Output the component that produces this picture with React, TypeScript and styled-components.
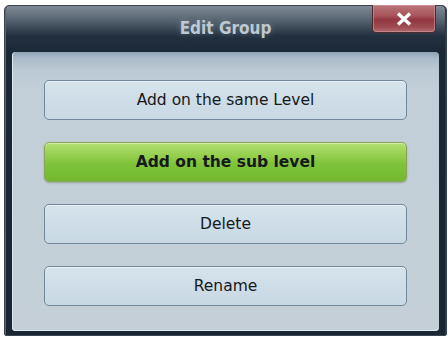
import React from "react";
import styled, { createGlobalStyle } from "styled-components";

const Global = createGlobalStyle`
  html, body { margin: 0; padding: 0; background: #ffffff; }
  body { font-family: "DejaVu Sans", sans-serif; }
`;

const Page = styled.div`
  padding: 5px 1px 1px 4px;
  width: 448px;
  height: 337px;
  box-sizing: border-box;
`;

const Window = styled.div`
  width: 443px;
  height: 331px;
  box-sizing: border-box;
  border: 1px solid #3a4550;
  border-radius: 5px 5px 2px 2px;
  background: linear-gradient(
    180deg,
    #7f8a95 0px,
    #63707c 10px,
    #3c4a58 22px,
    #22303f 30px,
    #1b2836 46px,
    #1a2633 100%
  );
  box-shadow: inset 1px 0 0 #59646f, inset -1px 0 0 #2c3845;
  display: flex;
  flex-direction: column;
  padding: 0 7px 4px 7px;
`;

const TitleBar = styled.div`
  height: 46px;
  display: grid;
  grid-template-columns: 1fr auto 1fr;
  align-items: center;
`;

const Title = styled.div`
  grid-column: 2;
  font-family: "DejaVu Sans Condensed", "DejaVu Sans", sans-serif;
  font-weight: bold;
  font-size: 17px;
  color: #bfc8d1;
  text-shadow: 0 0 6px rgba(200, 215, 230, 0.3);
  margin-top: -3px;
`;

const CloseButton = styled.div`
  grid-column: 3;
  justify-self: end;
  align-self: start;
  margin-right: 3px;
  margin-top: -1px;
  width: 64px;
  height: 28px;
  box-sizing: border-box;
  border: 1px solid #4a2a2e;
  border-top: none;
  border-radius: 0 0 4px 4px;
  background: linear-gradient(
    180deg,
    #b9777b 0%,
    #a7545b 40%,
    #923540 55%,
    #9d4a51 80%,
    #b06a6f 100%
  );
  box-shadow: inset 0 0 0 1px rgba(230, 170, 175, 0.45);
  display: flex;
  align-items: center;
  justify-content: center;
`;

const Panel = styled.div`
  flex: 1;
  border-radius: 4px;
  background: linear-gradient(
    180deg,
    #8ea3b6 0px,
    #a9bac8 6px,
    #bccad5 18px,
    #c3cfd8 40px,
    #c4cfd7 100%
  );
  box-shadow: inset 1px 0 0 #dfe7ed, inset 0 -1px 0 #e4ebf0;
  padding: 28px 32px 0 32px;
  display: flex;
  flex-direction: column;
  gap: 22px;
`;

const ActionButton = styled.div<{ $primary?: boolean }>`
  height: 40px;
  box-sizing: border-box;
  border-radius: 5px;
  display: flex;
  align-items: center;
  justify-content: center;
  font-family: "DejaVu Sans", sans-serif;
  font-size: 15.5px;
  color: #16191c;
  border: 1px solid ${(p) => (p.$primary ? "#8aa45c" : "#70889a")};
  background: ${(p) =>
    p.$primary
      ? "linear-gradient(180deg, #b3df74 0%, #98d052 30%, #7fc33a 55%, #72b82f 100%)"
      : "linear-gradient(180deg, #d7e4ec 0%, #cedde7 50%, #c9d9e3 100%)"};
  font-weight: ${(p) => (p.$primary ? "bold" : "normal")};
  box-shadow: ${(p) =>
    p.$primary
      ? "inset 0 1px 0 rgba(230,250,200,0.6), 0 1px 2px rgba(60,80,40,0.35)"
      : "inset 0 1px 0 rgba(240,246,250,0.7)"};
`;

export default function App() {
  return (
    <>
      <Global />
      <Page>
        <Window>
          <TitleBar>
            <Title>Edit Group</Title>
            <CloseButton>
              <svg width="16" height="14" viewBox="0 0 16 14">
                <path
                  d="M2 1.5 L14 12.5 M14 1.5 L2 12.5"
                  stroke="#ffffff"
                  strokeWidth="3.4"
                  strokeLinecap="butt"
                />
              </svg>
            </CloseButton>
          </TitleBar>
          <Panel>
            <ActionButton>Add on the same Level</ActionButton>
            <ActionButton $primary>Add on the sub level</ActionButton>
            <ActionButton>Delete</ActionButton>
            <ActionButton>Rename</ActionButton>
          </Panel>
        </Window>
      </Page>
    </>
  );
}
